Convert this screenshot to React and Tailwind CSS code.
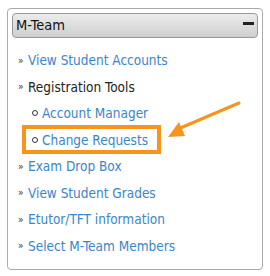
export default function App() {
  const top = ['View Student Accounts']
  const after = ['Exam Drop Box', 'View Student Grades', 'Etutor/TFT information', 'Select M-Team Members']

  return (
    <div className="relative w-[270px] h-[276px] bg-white pt-2 px-[7px]" style={{ fontFamily: '"DejaVu Sans Condensed", "DejaVu Sans", sans-serif' }}>
      <div className="h-[262px] border border-[#aaa] rounded-[4px] px-1 pt-1">
        {/* header */}
        <div className="h-[25px] flex items-center justify-between border border-[#999] rounded-[4px] bg-gradient-to-b from-[#ececec] to-[#cfcfcf] pl-[3px] pr-[3px]">
          <span className="text-[14.5px] text-[#111]">M-Team</span>
          <span className="w-[11px] h-[3px] bg-[#222] mb-[5px]"></span>
        </div>

        <ul className="pt-[9px] pl-[6px] text-[13.5px]">
          {top.map((t) => (
            <Item key={t} text={t} />
          ))}
          <li className="h-[26.5px] flex items-center">
            <span className="text-[#333] text-[10px] w-[10px]">»</span>
            <span className="text-[#222]">Registration Tools</span>
          </li>
          <li className="h-[26.5px] flex items-center pl-[14px]">
            <span className="w-[6px] h-[6px] rounded-full border border-[#333] mr-[4px]"></span>
            <span className="text-[#3a86c8]">Account Manager</span>
          </li>
          <li className="h-[26.5px] flex items-center">
            <div className="ml-[4px] h-[29px] w-[139px] border-[4px] border-[#f7941d] flex items-center pl-[6px]">
              <span className="w-[6px] h-[6px] rounded-full border border-[#333] mr-[4px]"></span>
              <span className="text-[#3a86c8]">Change Requests</span>
            </div>
          </li>
          {after.map((t) => (
            <Item key={t} text={t} />
          ))}
        </ul>
      </div>

      {/* annotation arrow */}
      <svg className="absolute left-0 top-0 pointer-events-none" width="270" height="276">
        <line x1="239" y1="103" x2="178" y2="129" stroke="#f7941d" strokeWidth="3" strokeLinecap="round" />
        <polygon points="168,137 179,122 185,136" fill="#f7941d" />
      </svg>
    </div>
  )
}

function Item({ text }) {
  return (
    <li className="h-[26.5px] flex items-center">
      <span className="text-[#333] text-[10px] w-[10px]">»</span>
      <span className="text-[#3a86c8]">{text}</span>
    </li>
  )
}
